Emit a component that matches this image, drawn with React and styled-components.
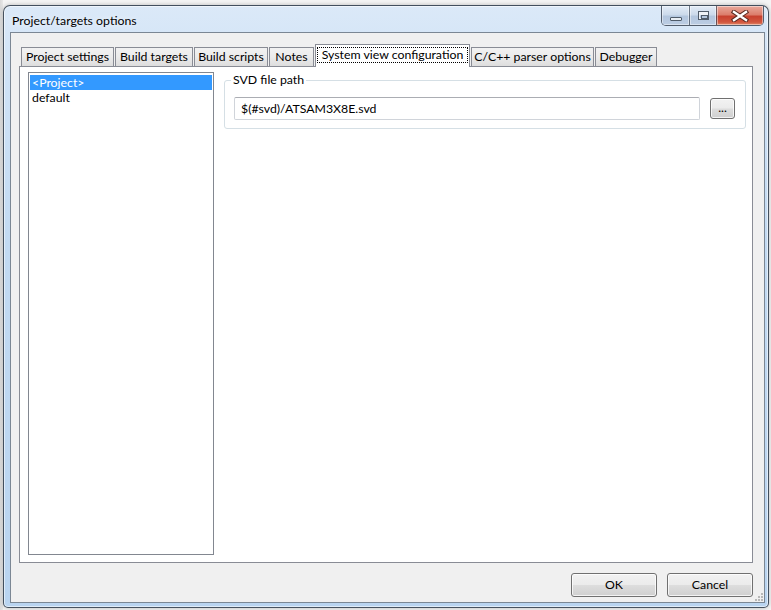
import React from "react";
import styled, { createGlobalStyle, css } from "styled-components";

const GlobalStyle = createGlobalStyle`
  html, body {
    margin: 0;
    padding: 0;
    background: #f2f2f2;
  }
  body {
    font-family: Lato, "Noto Sans", "Liberation Sans", sans-serif;
    font-size: 12px;
    color: #000;
  }
  * {
    box-sizing: border-box;
  }
`;

const Page = styled.div`
  width: 771px;
  height: 610px;
  padding: 5px 0 0 3px;
  overflow: hidden;
  background: linear-gradient(90deg, #d9d9d9 0, #e8e8e8 3px, #f4f4f4 3px);
`;

const Window = styled.div`
  width: 766px;
  height: 603px;
  display: flex;
  flex-direction: column;
  padding: 0 3px 4px 6px;
  border: 1px solid rgba(45, 55, 68, 0.85);
  border-radius: 7px 7px 5px 5px;
  background: linear-gradient(
    180deg,
    #dbe9f8 0%,
    #cfe2f6 12%,
    #c2daf2 40%,
    #b9d4f0 100%
  );
  box-shadow: inset 0 0 0 1px rgba(255, 255, 255, 0.55),
    0 0 4px rgba(0, 0, 0, 0.25);
`;

const TitleBar = styled.div`
  height: 26px;
  display: flex;
  align-items: flex-start;
  justify-content: space-between;
  flex-shrink: 0;
`;

const Title = styled.div`
  margin: 7px 0 0 2px;
  line-height: 16px;
  font-size: 12.3px;
  color: #000;
  text-shadow: 0 0 6px rgba(255, 255, 255, 0.9);
`;

const CaptionGroup = styled.div`
  display: flex;
  margin: 0 1px 0 0;
  height: 20px;
  border: 1px solid rgba(60, 70, 85, 0.85);
  border-top: none;
  border-radius: 0 0 5px 5px;
  overflow: hidden;
`;

const CaptionButton = styled.div`
  width: ${(p) => p.$w}px;
  height: 100%;
  display: flex;
  align-items: center;
  justify-content: center;
  border-left: ${(p) => (p.$first ? "none" : "1px solid rgba(60,70,85,0.7)")};
  box-shadow: inset 0 0 0 1px rgba(255, 255, 255, 0.45);
  ${(p) =>
    p.$close
      ? css`
          background: linear-gradient(
            180deg,
            #e9a99c 0%,
            #dc7e6c 45%,
            #c8412f 55%,
            #d2573f 85%,
            #e08a6a 100%
          );
        `
      : css`
          background: linear-gradient(
            180deg,
            #e3ecf7 0%,
            #ccdaeb 45%,
            #b3c6de 55%,
            #bccde3 100%
          );
        `}
`;

const MinGlyph = styled.div`
  width: 12px;
  height: 4px;
  margin-top: 6px;
  background: #e8edf3;
  border: 1px solid #4f5b69;
  border-radius: 1px;
`;

const MaxGlyph = styled.div`
  width: 11px;
  height: 9px;
  background: transparent;
  border: 1px solid #4f5b69;
  box-shadow: inset 0 0 0 1px #eef2f7, inset 0 2px 0 1px #eef2f7;
  position: relative;
  &::after {
    content: "";
    position: absolute;
    left: 2px;
    top: 3px;
    width: 5px;
    height: 2px;
    border: 1px solid #4f5b69;
  }
`;

const Client = styled.div`
  flex: 1;
  display: flex;
  flex-direction: column;
  position: relative;
  border: 1px solid #7b8794;
  background: #f0f0f0;
  padding: 11px 11px 5px 8px;
`;

const TabStrip = styled.div`
  display: flex;
  align-items: flex-end;
  height: 22px;
  padding-left: 2px;
  flex-shrink: 0;
`;

const Tab = styled.div`
  width: ${(p) => p.$w}px;
  margin-right: 1px;
  display: flex;
  align-items: center;
  justify-content: center;
  border: 1px solid #898c95;
  border-bottom: none;
  white-space: nowrap;
  font-size: 12.3px;
  ${(p) =>
    p.$active
      ? css`
          height: 23px;
          margin-bottom: -1px;
          align-items: flex-start;
          padding-top: 2px;
          background: #fff;
          position: relative;
          z-index: 1;
        `
      : css`
          height: 19px;
          padding-bottom: 1px;
          background: linear-gradient(180deg, #f2f2f2 0%, #ebebeb 50%, #dddddd 100%);
        `}
`;

const FocusRect = styled.span`
  display: block;
  width: 100%;
  margin: 0 1px;
  height: 16px;
  line-height: 14px;
  border: 1px dotted #000;
  text-align: center;
`;

const Panel = styled.div`
  flex: 1;
  display: flex;
  border: 1px solid #898c95;
  background: #fff;
  padding: 5px 6px 7px 8px;
`;

const TargetList = styled.div`
  width: 186px;
  margin-right: 10px;
  border: 1px solid #828790;
  background: #fff;
  padding: 2px 1px;
  flex-shrink: 0;
`;

const ListItem = styled.div`
  height: 15px;
  line-height: 15px;
  padding-left: 2px;
  font-size: 12.3px;
  ${(p) =>
    p.$selected &&
    css`
      background: #3399ff;
      color: #fff;
    `}
`;

const Content = styled.div`
  flex: 1;
  min-width: 0;
`;

const GroupBox = styled.fieldset`
  margin: 0;
  min-width: 0;
  padding: 9px 10px 8px 9px;
  border: 1px solid #d5dfe5;
  border-radius: 3px;
  display: flex;
  align-items: center;
`;

const Legend = styled.legend`
  padding: 0 2px;
  margin-left: -3px;
  line-height: 16px;
  font-size: 12.3px;
`;

const TextBox = styled.div`
  flex: 1;
  height: 23px;
  line-height: 21px;
  padding-left: 6px;
  border: 1px solid #d0d4da;
  border-top-color: #abadb3;
  border-radius: 2px;
  background: #fff;
  font-size: 12.3px;
`;

const winButton = css`
  border: 1px solid #707070;
  border-radius: 3px;
  background: linear-gradient(180deg, #f2f2f2 0%, #ebebeb 48%, #dddddd 52%, #cfcfcf 100%);
  box-shadow: inset 0 0 0 1px rgba(255, 255, 255, 0.75);
  display: flex;
  align-items: center;
  justify-content: center;
  font-size: 12.3px;
`;

const BrowseButton = styled.div`
  ${winButton}
  width: 25px;
  height: 21px;
  margin-left: 10px;
  padding-bottom: 3px;
  flex-shrink: 0;
`;

const Footer = styled.div`
  display: flex;
  justify-content: flex-end;
  gap: 10px;
  margin-top: 10px;
  flex-shrink: 0;
`;

const DialogButton = styled.div`
  ${winButton}
  width: 86px;
  height: 24px;
  padding-bottom: 1px;
`;

const Grip = styled.svg`
  position: absolute;
  right: 1px;
  bottom: 1px;
`;

const tabs = [
  { label: "Project settings", w: 93 },
  { label: "Build targets", w: 78 },
  { label: "Build scripts", w: 74 },
  { label: "Notes", w: 45 },
  { label: "System view configuration", w: 155, active: true },
  { label: "C/C++ parser options", w: 123 },
  { label: "Debugger", w: 62 },
];

const targets = ["<Project>", "default"];

export default function App() {
  return (
    <>
      <GlobalStyle />
      <Page>
        <Window>
          <TitleBar>
            <Title>Project/targets options</Title>
            <CaptionGroup>
              <CaptionButton $w={27} $first>
                <MinGlyph />
              </CaptionButton>
              <CaptionButton $w={27}>
                <MaxGlyph />
              </CaptionButton>
              <CaptionButton $w={47} $close>
                <svg width="18" height="12" viewBox="0 0 18 12">
                  <path
                    d="M3 2 L15 10 M15 2 L3 10"
                    stroke="#5a2a22"
                    strokeWidth="4.5"
                    strokeLinecap="square"
                  />
                  <path
                    d="M3 2 L15 10 M15 2 L3 10"
                    stroke="#fff"
                    strokeWidth="2.4"
                    strokeLinecap="square"
                  />
                </svg>
              </CaptionButton>
            </CaptionGroup>
          </TitleBar>
          <Client>
            <TabStrip>
              {tabs.map((t) => (
                <Tab key={t.label} $w={t.w} $active={t.active}>
                  {t.active ? <FocusRect>{t.label}</FocusRect> : t.label}
                </Tab>
              ))}
            </TabStrip>
            <Panel>
              <TargetList>
                {targets.map((name, i) => (
                  <ListItem key={name} $selected={i === 0}>
                    {name}
                  </ListItem>
                ))}
              </TargetList>
              <Content>
                <GroupBox>
                  <Legend>SVD file path</Legend>
                  <TextBox>$(#svd)/ATSAM3X8E.svd</TextBox>
                  <BrowseButton>...</BrowseButton>
                </GroupBox>
              </Content>
            </Panel>
            <Footer>
              <DialogButton>OK</DialogButton>
              <DialogButton>Cancel</DialogButton>
            </Footer>
            <Grip width="8" height="8" viewBox="0 0 8 8">
              <g fill="#b8b8b8">
                <rect x="6" y="0" width="2" height="2" />
                <rect x="3" y="3" width="2" height="2" />
                <rect x="6" y="3" width="2" height="2" />
                <rect x="0" y="6" width="2" height="2" />
                <rect x="3" y="6" width="2" height="2" />
                <rect x="6" y="6" width="2" height="2" />
              </g>
            </Grip>
          </Client>
        </Window>
      </Page>
    </>
  );
}
